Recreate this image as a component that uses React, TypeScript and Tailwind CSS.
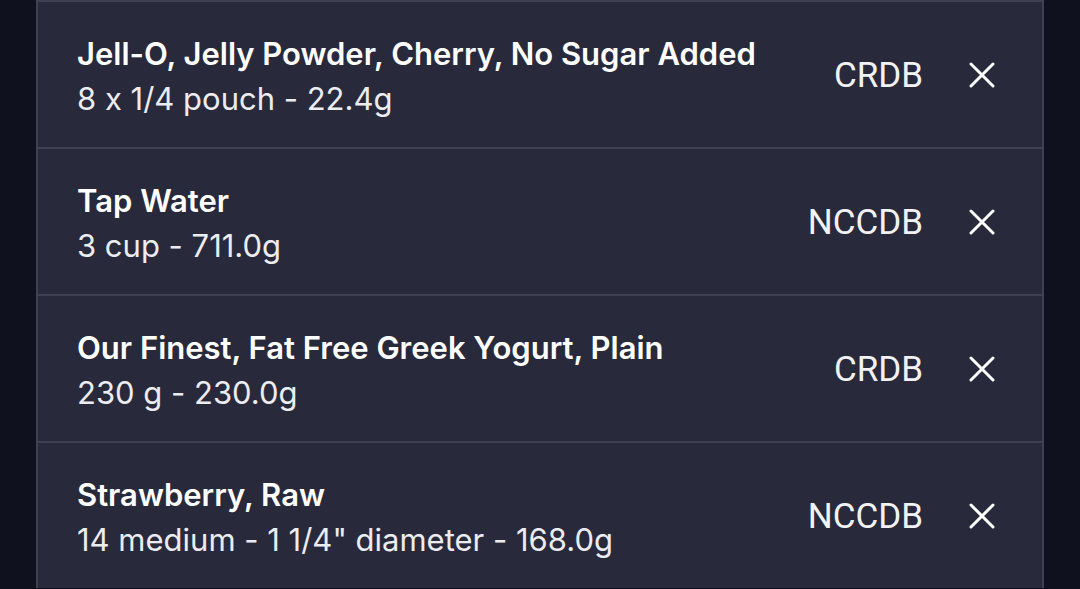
import React from "react";

type Entry = {
  name: string;
  amount: string;
  source: string;
};

const entries: Entry[] = [
  { name: "Jell-O, Jelly Powder, Cherry, No Sugar Added", amount: "8 x 1/4 pouch - 22.4g", source: "CRDB" },
  { name: "Tap Water", amount: "3 cup - 711.0g", source: "NCCDB" },
  { name: "Our Finest, Fat Free Greek Yogurt, Plain", amount: "230 g - 230.0g", source: "CRDB" },
  { name: "Strawberry, Raw", amount: '14 medium - 1 1/4" diameter - 168.0g', source: "NCCDB" },
];

function CloseIcon() {
  return (
    <svg width="26" height="26" viewBox="0 0 26 26" fill="none" stroke="currentColor" strokeWidth="3" strokeLinecap="round">
      <path d="M2 2 L24 24 M24 2 L2 24" />
    </svg>
  );
}

export default function App(): React.ReactElement {
  return (
    <div className="h-[589px] overflow-hidden bg-[#10111f]">
      <ul className="mx-[36px] border-x-2 border-[#3e4054] bg-[#282a3b]">
        {entries.map((e) => (
          <li
            key={e.name}
            className="flex h-[147px] items-center border-t-2 border-[#3e4054] pl-[39px] pr-[47px] text-white"
          >
            <div className="flex-1 pt-[4px] font-['Inter',sans-serif] [font-feature-settings:'calt'_0]">
              <p className="text-[31px] font-semibold leading-[44px]">{e.name}</p>
              <p className="text-[31px] font-normal leading-[46px] text-[#ececf1]">{e.amount}</p>
            </div>
            <span className="pt-[4px] font-['Roboto',sans-serif] text-[35px] text-[#f2f2f5]">{e.source}</span>
            <button className="ml-[46px] text-white">
              <CloseIcon />
            </button>
          </li>
        ))}
      </ul>
    </div>
  );
}
